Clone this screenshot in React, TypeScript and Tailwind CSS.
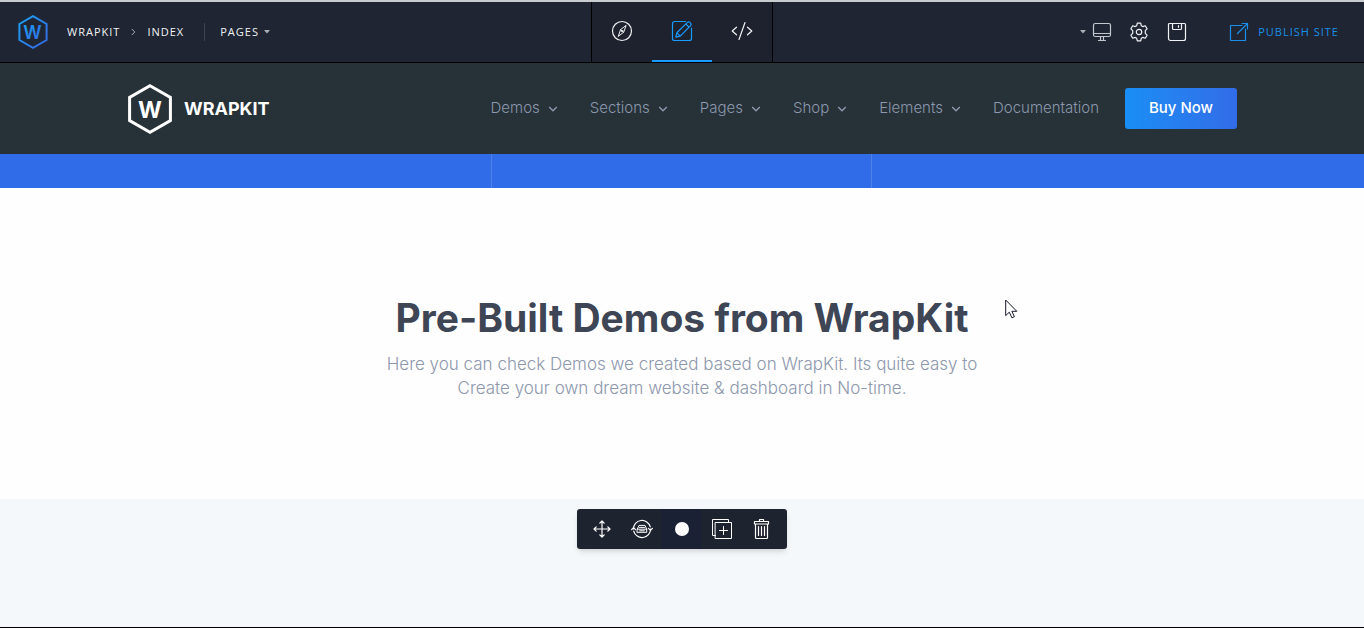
import type { ReactNode, SVGProps } from "react";

function Icon({ children, ...props }: SVGProps<SVGSVGElement> & { children: ReactNode }) {
  return (
    <svg
      width="22"
      height="22"
      viewBox="0 0 22 22"
      fill="none"
      stroke="currentColor"
      strokeWidth="1.2"
      strokeLinecap="round"
      strokeLinejoin="round"
      aria-hidden="true"
      {...props}
    >
      {children}
    </svg>
  );
}

function Caret() {
  return (
    <svg width="6" height="4" viewBox="0 0 6 4" fill="#a9adb5" aria-hidden="true">
      <path d="M0 0h6L3 3.5z" />
    </svg>
  );
}

function BuilderLogo() {
  return (
    <svg width="30" height="34" viewBox="0 0 30 34" fill="none" aria-hidden="true">
      <defs>
        <linearGradient id="builder-logo" x1="0" y1="0" x2="1" y2="1">
          <stop offset="0" stopColor="#1aa3f5" />
          <stop offset="1" stopColor="#3566e0" />
        </linearGradient>
      </defs>
      <path d="M15 1.2 28.6 9v16L15 32.8 1.4 25V9z" stroke="url(#builder-logo)" strokeWidth="2" />
      <text
        x="15"
        y="23.5"
        textAnchor="middle"
        fontFamily="Inter, sans-serif"
        fontSize="18"
        fontWeight="600"
        fill="url(#builder-logo)"
      >
        W
      </text>
    </svg>
  );
}

function SiteLogo() {
  return (
    <svg width="46" height="50" viewBox="0 0 46 50" fill="none" aria-hidden="true">
      <path d="M23 1.8 43.4 13.4v23.2L23 48.2 2.6 36.6V13.4z" stroke="#fff" strokeWidth="3" />
      <text
        x="23"
        y="34"
        textAnchor="middle"
        fontFamily="Inter, sans-serif"
        fontSize="23"
        fontWeight="700"
        fill="#fff"
      >
        W
      </text>
    </svg>
  );
}

function TopBar() {
  return (
    <header className="grid h-[63px] grid-cols-[1fr_auto_1fr] border-t-2 border-b border-t-[#c9cdd0] border-b-black bg-[#1f2533] font-['Open_Sans',sans-serif] text-[11px] tracking-[1px] text-[#f1f2f4]">
      <div className="flex items-center pl-[18px]">
        <BuilderLogo />
        <nav aria-label="Project" className="ml-[19px] flex items-center">
          <a href="#wrapkit">WRAPKIT</a>
          <svg width="5" height="8" viewBox="0 0 5 8" fill="none" stroke="#a9adb5" className="mx-[11px]" aria-hidden="true">
            <path d="m.8 1 3 3-3 3" />
          </svg>
          <a href="#index">INDEX</a>
        </nav>
        <span className="mr-[15px] ml-5 h-[18px] w-px bg-[#3c4352]" />
        <button className="flex items-center gap-[5px]">
          PAGES <Caret />
        </button>
      </div>

      <div className="flex border-x border-black bg-[#1e222e]">
        <button aria-label="Navigate" className="flex w-[60px] items-center justify-center border-b-2 border-transparent">
          <Icon>
            <circle cx="11" cy="11" r="9.5" />
            <path d="m14.8 5.6-5.2 4-2.4 6.8 5.2-4z M9.6 9.6l2.8 2.8" strokeWidth="1" />
            <circle cx="11" cy="11" r=".8" strokeWidth=".8" />
          </Icon>
        </button>
        <button aria-label="Edit" aria-pressed="true" className="flex w-[60px] items-center justify-center border-b-2 border-[#1b9bff] text-[#1b9bff]">
          <Icon>
            <path d="M14.5 1.5h-11a2 2 0 0 0-2 2v15a2 2 0 0 0 2 2h15a2 2 0 0 0 2-2V8" />
            <path d="m4.8 17.2 1.1-4.4L16.4 2.4a1.7 1.7 0 0 1 2.4 0l.8.8a1.7 1.7 0 0 1 0 2.4L9.2 16.1zM5.9 12.8l3.3 3.3M14.8 4l3.2 3.2" />
          </Icon>
        </button>
        <button aria-label="Code" className="flex w-[60px] items-center justify-center border-b-2 border-transparent">
          <Icon>
            <path d="M5.5 7.2 1.2 11l4.3 3.8M16.5 7.2l4.3 3.8-4.3 3.8M14 2.5 8 19.5" />
          </Icon>
        </button>
      </div>

      <div className="flex items-center justify-end pr-[25px]">
        <button aria-label="Screen size" className="flex items-center gap-[5px]">
          <Caret />
          <Icon stroke="#c4c7cd">
            <rect x="2.5" y="2.5" width="17" height="13" rx="1.8" />
            <path d="M2.5 12.5h17M9.5 15.5v4M12.5 15.5v4M7.5 19.5h7" />
          </Icon>
        </button>
        <button aria-label="Settings" className="ml-[15px]">
          <Icon>
            <circle cx="11" cy="11" r="2.7" />
            <path d="M9.3 2.2h3.4l.6 2.5 1.5.9 2.5-.8 1.8 3-1.8 1.8v2.8l1.8 1.8-1.8 3-2.5-.8-1.5.9-.6 2.5H9.3l-.6-2.5-1.5-.9-2.5.8-1.8-3 1.8-1.8V9.6L2.9 7.8l1.8-3 2.5.8 1.5-.9z" />
          </Icon>
        </button>
        <button aria-label="Save" className="ml-4">
          <Icon>
            <path d="M3.5 2.5h15a1 1 0 0 1 1 1v14a2 2 0 0 1-2 2h-13a2 2 0 0 1-2-2v-14a1 1 0 0 1 1-1zM6.5 2.5v5a1 1 0 0 0 1 1h7a1 1 0 0 0 1-1v-5M12.5 4.7v1.6" />
          </Icon>
        </button>
        <button className="ml-10 flex items-center gap-2 text-[#1b8fe8]">
          <Icon>
            <path d="M14 4.5H2.5v15h15V8M9.5 12.5l10-10M14 2.5h5.5V8" />
          </Icon>
          PUBLISH SITE
        </button>
      </div>
    </header>
  );
}

const menu = [
  { label: "Demos", dropdown: true },
  { label: "Sections", dropdown: true },
  { label: "Pages", dropdown: true },
  { label: "Shop", dropdown: true },
  { label: "Elements", dropdown: true },
  { label: "Documentation", dropdown: false },
];

function SiteHeader() {
  return (
    <div className="bg-[#263238]">
      <div className="mx-auto flex h-[91px] max-w-[1140px] items-center justify-between px-[15px]">
        <a href="#home" className="flex items-center gap-[11px] text-lg font-bold text-white">
          <SiteLogo />
          WRAPKIT
        </a>
        <nav aria-label="Main" className="flex items-center gap-[26px] text-[15px] font-light text-[#8d97ad]">
          <ul className="flex items-center gap-8">
            {menu.map((item) => (
              <li key={item.label}>
                <a href={`#${item.label.toLowerCase()}`} className="flex items-center gap-2">
                  {item.label}
                  {item.dropdown && (
                    <svg width="10" height="6" viewBox="0 0 10 6" fill="none" stroke="currentColor" strokeWidth="1.4" aria-hidden="true">
                      <path d="m1.2 1 3.8 3.8L8.8 1" />
                    </svg>
                  )}
                </a>
              </li>
            ))}
          </ul>
          <button className="h-[41px] w-28 rounded-[3px] bg-linear-to-r from-[#188ef4] to-[#316ce8] font-medium text-white">
            Buy Now
          </button>
        </nav>
      </div>
    </div>
  );
}

function SectionToolbar() {
  return (
    <div role="toolbar" aria-label="Section" className="flex h-10 rounded-[3px] bg-[#1e2330] px-[5px] text-white shadow-md">
      <button aria-label="Move" className="flex w-10 items-center justify-center">
        <Icon>
          <path d="M11 3v16M3 11h16M8.8 5.2 11 3l2.2 2.2M8.8 16.8 11 19l2.2-2.2M5.2 8.8 3 11l2.2 2.2M16.8 8.8 19 11l-2.2 2.2" />
        </Icon>
      </button>
      <button aria-label="Swap block" className="flex w-10 items-center justify-center">
        <Icon>
          <path d="M2.4 11a8.6 8.6 0 0 1 16.9-2.2M19.6 11a8.6 8.6 0 0 1-16.9 2.2M.6 11.6l1.9-2 2 2M21.4 10.4l-1.9 2-2-2" />
          <path d="M6.3 11.2 8 7.4h6l1.7 3.8v3.1H6.3zM6.3 11.2h9.4M8.5 9.4h5M8.7 12.8h4.6" strokeWidth="1" />
        </Icon>
      </button>
      <button aria-label="Background" className="flex w-10 items-center justify-center bg-[#1b2135]">
        <span className="size-[14px] rounded-full bg-white" />
      </button>
      <button aria-label="Duplicate" className="flex w-10 items-center justify-center">
        <Icon strokeWidth="1">
          <path d="M4.5 17.5h-3v-16h16v3M4.5 4.5h16v16h-16zM12.5 8.5v8M8.5 12.5h8" strokeLinejoin="miter" />
        </Icon>
      </button>
      <button aria-label="Delete" className="flex w-10 items-center justify-center">
        <Icon>
          <path d="M4.5 6v13.5a1 1 0 0 0 1 1h10a1 1 0 0 0 1-1V6M3.5 3.5h14V6h-14zM8.5 3.5v-2h4v2M7.5 8.5v9M10.5 8.5v9M13.5 8.5v9" />
        </Icon>
      </button>
    </div>
  );
}

export default function App() {
  return (
    <div className="relative flex min-h-screen flex-col bg-[#f4f8fa] font-['Inter',sans-serif]">
      <TopBar />
      <SiteHeader />
      <div className="bg-[#316ce8]">
        <div className="mx-auto grid h-[34px] max-w-[1140px] grid-cols-3 divide-x divide-white/15">
          <div />
          <div />
          <div />
        </div>
      </div>
      <section className="bg-[#fefefe] px-4 pt-[108px] pb-[99px] text-center">
        <h1 className="text-[39px] leading-11 font-bold text-[#3e4555]">Pre-Built Demos from WrapKit</h1>
        <p className="mt-3 text-[17px] leading-6 font-light text-[#8d97ad]">
          Here you can check Demos we created based on WrapKit. Its quite easy to
          <br />
          Create your own dream website &amp; dashboard in No-time.
        </p>
      </section>
      <section className="flex grow items-start justify-center border-b border-black pt-[10px]">
        <SectionToolbar />
      </section>
      <svg
        className="absolute top-[299px] left-[1005px]"
        width="13"
        height="20"
        viewBox="0 0 13 20"
        fill="#fff"
        stroke="#15182a"
        aria-hidden="true"
      >
        <path d="M.7 1v15.6l3.6-3.4 2.6 5.6 2.5-1.1-2.5-5.4h4.9z" />
      </svg>
    </div>
  );
}
